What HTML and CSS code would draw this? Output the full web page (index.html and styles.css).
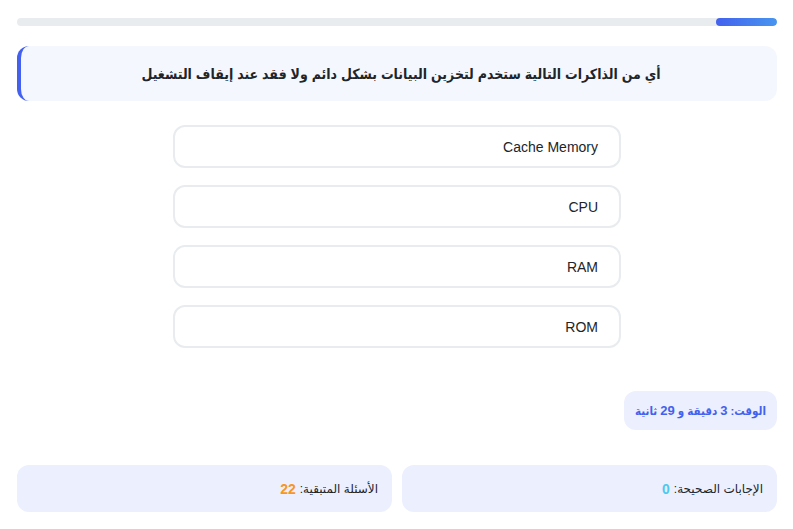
FILE: index.html
```html
<!DOCTYPE html>
<html lang="ar" dir="rtl">
<head>
<meta charset="utf-8">
<link rel="stylesheet" href="styles.css">
</head>
<body>
<div class="quiz">
  <div class="progress"><div class="progress-fill" style="width: 8%"></div></div>
  <div class="question">أي من الذاكرات التالية ستخدم لتخزين البيانات بشكل دائم ولا فقد عند إيقاف التشغيل</div>
  <div class="options">
    <div class="option">Cache Memory</div>
    <div class="option">CPU</div>
    <div class="option">RAM</div>
    <div class="option">ROM</div>
  </div>
  <div class="timer-row"><div class="timer">الوقت: <b>3</b> دقيقة و <b>29</b> ثانية</div></div>
  <div class="stats">
    <div class="stat">الإجابات الصحيحة: <span class="correct">0</span></div>
    <div class="stat">الأسئلة المتبقية: <span class="remaining">22</span></div>
  </div>
</div>
</body>
</html>
```
FILE: styles.css
```css
html, body {
  margin: 0;
  padding: 0;
  background: #ffffff;
}
body {
  font-family: "Liberation Sans", "DejaVu Sans", Arial, sans-serif;
  color: #212529;
}
.quiz {
  padding: 18px 16px 0 17px;
}
.progress {
  height: 8px;
  background: #e9ecef;
  border-radius: 4px;
  overflow: hidden;
}
.progress-fill {
  height: 100%;
  background: linear-gradient(90deg, #4361ee, #4895ef);
  border-radius: 4px;
}
.question {
  margin-top: 20px;
  height: 55px;
  box-sizing: border-box;
  background: #f4f7fe;
  border-left: 4px solid #4361ee;
  border-radius: 12px;
  display: flex;
  align-items: center;
  justify-content: center;
  font-family: "Liberation Sans", "DejaVu Sans Condensed", "DejaVu Sans", sans-serif;
  font-size: 14px;
  font-weight: bold;
  color: #212529;
  padding-left: 4px;
}
.options {
  width: 448px;
  margin: 24px auto 0;
  display: flex;
  flex-direction: column;
  gap: 17px;
}
.option {
  height: 43px;
  box-sizing: border-box;
  border: 2px solid #e9ecef;
  border-radius: 12px;
  padding: 0 21px;
  display: flex;
  align-items: center;
  font-size: 14px;
  color: #212529;
  background: #fff;
}
.timer-row {
  margin-top: 43px;
  display: flex;
}
.timer {
  height: 39px;
  box-sizing: border-box;
  padding: 0 11px;
  background: #eceffd;
  border-radius: 12px;
  display: flex;
  align-items: center;
  gap: 3px;
  font-family: "Liberation Sans", "DejaVu Sans Condensed", "DejaVu Sans", sans-serif;
  font-size: 11.5px;
  font-weight: bold;
  color: #4361ee;
}
.timer b {
  font-size: 13px;
}
.stats {
  margin-top: 35px;
  display: grid;
  grid-template-columns: 1fr 1fr;
  gap: 10px;
}
.stat {
  height: 47px;
  box-sizing: border-box;
  background: #eceffd;
  border-radius: 12px;
  padding: 0 14px;
  display: flex;
  align-items: center;
  font-size: 12px;
  color: #212529;
  gap: 4px;
}
.correct {
  color: #4cc9f0;
  font-weight: bold;
  font-size: 14px;
}
.remaining {
  color: #f8961e;
  font-weight: bold;
  font-size: 14px;
}
```
